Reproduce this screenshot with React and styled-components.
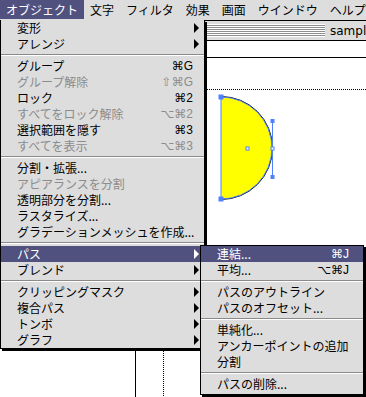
import styled, { createGlobalStyle } from 'styled-components'

const HIGHLIGHT = '#51517f'
const MENU_BG = '#dddddd'
const DISABLED = '#8c8c8c'
const SELECT = '#4f80ff'

const GlobalStyle = createGlobalStyle`
  html, body {
    margin: 0;
    padding: 0;
    background: #fff;
  }
  body {
    font-family: "Noto Sans CJK JP", sans-serif;
  }
`

const Screen = styled.div`
  position: relative;
  width: 366px;
  height: 397px;
  overflow: hidden;
  display: flex;
  flex-direction: column;
  background: #fff;
  font-family: "Noto Sans CJK JP", sans-serif;
  font-size: 12px;
`

const MenuBar = styled.div`
  display: flex;
  flex: 0 0 20px;
  background: ${MENU_BG};
  white-space: nowrap;
`

const MenuTitle = styled.div`
  height: 19px;
  line-height: 19px;
  padding: 0 6px;
  background: ${p => (p.$open ? HIGHLIGHT : 'transparent')};
  color: ${p => (p.$open ? '#fff' : '#000')};
`

const DocWindow = styled.div`
  flex: 1;
  display: flex;
  flex-direction: column;
  width: 560px;
  border-top: 1px solid #000;
`

const TitleBar = styled.div`
  display: flex;
  align-items: center;
  gap: 5px;
  height: 19px;
  padding: 0 4px;
  background: ${MENU_BG};
  border-bottom: 1px solid #000;
`

const Stripes = styled.div`
  flex: ${p => (p.$width ? `0 0 ${p.$width}px` : '1')};
  height: 13px;
  background: repeating-linear-gradient(to bottom, #fff 0 1px, #8e8e8e 1px 2px);
`

const WindowTitle = styled.div`
  font-family: "DejaVu Sans", sans-serif;
  font-size: 12px;
  color: #000;
  white-space: nowrap;
`

const Canvas = styled.div`
  position: relative;
  flex: 1;
  background: #fff;
`

const Artboard = styled.div`
  position: absolute;
  left: 135px;
  top: 16px;
  width: 500px;
  height: 500px;
  border-top: 1px solid #000;
  border-left: 1px solid #000;
`

const PageTile = styled.div`
  position: absolute;
  left: 163px;
  top: 48px;
  width: 500px;
  height: 500px;
  border-top: 1px dotted #000;
  border-left: 1px dotted #000;
`

const Artwork = styled.svg`
  position: absolute;
  left: 216px;
  top: 52px;
  overflow: visible;
`

const Menu = styled.div`
  position: absolute;
  left: ${p => p.$left}px;
  top: ${p => p.$top}px;
  width: ${p => p.$width}px;
  box-sizing: border-box;
  background: ${MENU_BG};
  border: 1px solid #000;
  border-top: ${p => (p.$dropped ? 'none' : '1px solid #000')};
  padding-bottom: ${p => p.$padBottom || 0}px;
  box-shadow: 2px 2px 0 #000;
  white-space: nowrap;
`

const Item = styled.div`
  display: flex;
  align-items: center;
  height: 16px;
  line-height: 16px;
  padding: 0 5px 0 16px;
  background: ${p => (p.$active ? HIGHLIGHT : 'transparent')};
  color: ${p => (p.$active ? '#fff' : p.$disabled ? DISABLED : '#000')};
`

const Label = styled.span`
  flex: 1;
`

const Shortcut = styled.span`
  margin-right: ${p => p.$gap}px;
  font-family: "Liberation Sans", "DejaVu Sans", sans-serif;
  font-size: 12px;
`

const Arrow = styled.span`
  width: 0;
  height: 0;
  border-top: 5px solid transparent;
  border-bottom: 5px solid transparent;
  border-left: 5px solid ${p => (p.$active ? '#fff' : '#000')};
`

const Separator = styled.div`
  display: flex;
  flex-direction: column;
  justify-content: center;
  height: 6px;

  &::before {
    content: '';
    height: 1px;
    background: #8a8a8a;
  }
  &::after {
    content: '';
    height: 1px;
    background: #fff;
  }
`

const menuTitles = ['オブジェクト', '文字', 'フィルタ', '効果', '画面', 'ウインドウ', 'ヘルプ']

const objectMenu = [
  { label: '変形', sub: true },
  { label: 'アレンジ', sub: true },
  '-',
  { label: 'グループ', key: '⌘G' },
  { label: 'グループ解除', key: '⇧⌘G', disabled: true },
  { label: 'ロック', key: '⌘2' },
  { label: 'すべてをロック解除', key: '⌥⌘2', disabled: true },
  { label: '選択範囲を隠す', key: '⌘3' },
  { label: 'すべてを表示', key: '⌥⌘3', disabled: true },
  '-',
  { label: '分割・拡張...' },
  { label: 'アピアランスを分割', disabled: true },
  { label: '透明部分を分割...' },
  { label: 'ラスタライズ...' },
  { label: 'グラデーションメッシュを作成...' },
  '-',
  { label: 'パス', sub: true, active: true },
  { label: 'ブレンド', sub: true },
  '-',
  { label: 'クリッピングマスク', sub: true },
  { label: '複合パス', sub: true },
  { label: 'トンボ', sub: true },
  { label: 'グラフ', sub: true },
]

const pathMenu = [
  { label: '連結...', key: '⌘J', active: true },
  { label: '平均...', key: '⌥⌘J' },
  '-',
  { label: 'パスのアウトライン' },
  { label: 'パスのオフセット...' },
  '-',
  { label: '単純化...' },
  { label: 'アンカーポイントの追加' },
  { label: '分割' },
  '-',
  { label: 'パスの削除...' },
]

const MenuItems = ({ items, keyGap }) =>
  items.map((it, i) =>
    it === '-' ? (
      <Separator key={i} />
    ) : (
      <Item key={i} $active={it.active} $disabled={it.disabled}>
        <Label>{it.label}</Label>
        {it.key && <Shortcut $gap={keyGap}>{it.key}</Shortcut>}
        {it.sub && <Arrow $active={it.active} />}
      </Item>
    )
  )

const Handle = ({ x, y, size, hollow }) => (
  <rect
    x={x - size / 2}
    y={y - size / 2}
    width={size}
    height={size}
    fill={hollow ? '#fff' : SELECT}
    stroke={SELECT}
    strokeWidth="1"
  />
)

const HalfCircle = () => (
  <Artwork width="64" height="112" viewBox="0 0 64 112">
    <path d="M5 4 A51 51 0 0 1 5 106 Z" fill="#ffff00" stroke="none" />
    <path d="M5 3.5 A51.5 51.5 0 0 1 5 106.5" fill="none" stroke="#000" strokeWidth="1" />
    <path d="M5 4 A51 51 0 0 1 5 106 Z" fill="none" stroke={SELECT} strokeWidth="1" />
    <line x1="56.5" y1="28" x2="56.5" y2="84" stroke={SELECT} strokeWidth="1" />
    <Handle x={56.5} y={28} size={3} />
    <Handle x={56.5} y={84} size={3} />
    <Handle x={5} y={4} size={4} />
    <Handle x={5} y={106} size={4} />
    <Handle x={56.5} y={55.5} size={3} hollow />
    <Handle x={31.5} y={55.5} size={3} hollow />
  </Artwork>
)

export default function App() {
  return (
    <>
      <GlobalStyle />
      <Screen>
        <MenuBar>
          {menuTitles.map((t, i) => (
            <MenuTitle key={t} $open={i === 0}>
              {t}
            </MenuTitle>
          ))}
        </MenuBar>
        <DocWindow>
          <TitleBar>
            <Stripes $width={321} />
            <WindowTitle>sample.ai</WindowTitle>
            <Stripes />
          </TitleBar>
          <Canvas>
            <Artboard />
            <PageTile />
            <HalfCircle />
          </Canvas>
        </DocWindow>

        <Menu $left={0} $top={20} $width={205} $dropped>
          <MenuItems items={objectMenu} keyGap={6} />
        </Menu>
        <Menu $left={200} $top={245} $width={164} $padBottom={2}>
          <MenuItems items={pathMenu} keyGap={9} />
        </Menu>
      </Screen>
    </>
  )
}
